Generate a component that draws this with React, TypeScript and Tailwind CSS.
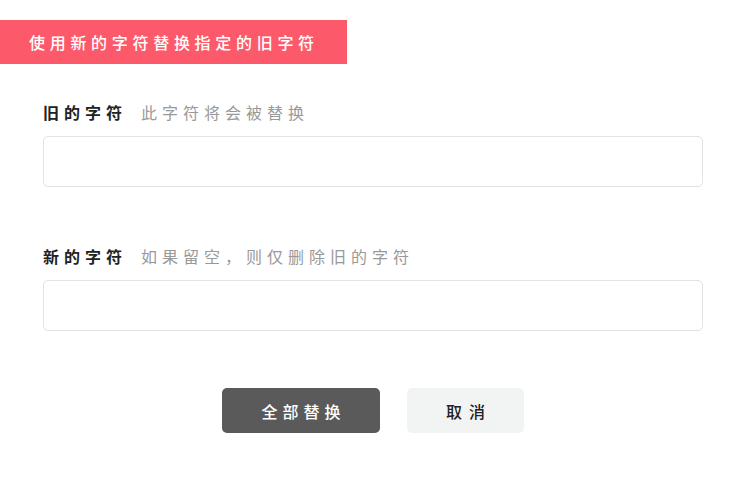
import React from "react";

const font = { fontFamily: '"Noto Sans CJK SC", "Noto Sans", sans-serif' };

export default function App() {
  return (
    <div className="w-[746px] h-[480px] bg-white" style={font}>
      <div className="pt-[20px]">
        <div className="w-[347px] h-[44px] bg-[#fc5a6a] flex items-center pl-[29px] text-white text-[16px] tracking-[4.7px] font-medium">
          使用新的字符替换指定的旧字符
        </div>
      </div>
      <div className="px-[43px]">
        <div className="mt-[36px] h-[24px] flex items-center">
          <span className="text-[16px] font-bold text-[#222] tracking-[5px]">旧的字符</span>
          <span className="ml-[14px] text-[16px] text-[#999] tracking-[5px]">此字符将会被替换</span>
        </div>
        <input className="mt-[12px] block w-[660px] h-[51px] border border-[#e3e3e3] rounded-[5px] outline-none px-3" />
        <div className="mt-[57px] h-[24px] flex items-center">
          <span className="text-[16px] font-bold text-[#222] tracking-[5px]">新的字符</span>
          <span className="ml-[14px] text-[16px] text-[#999] tracking-[5px]">如果留空，则仅删除旧的字符</span>
        </div>
        <input className="mt-[12px] block w-[660px] h-[51px] border border-[#e3e3e3] rounded-[5px] outline-none px-3" />
      </div>
      <div className="mt-[57px] flex justify-center gap-[27px]">
        <button className="w-[158px] h-[45px] rounded-[5px] bg-[#5a5a5a] text-white text-[16px] tracking-[5px] indent-[5px] font-medium">
          全部替换
        </button>
        <button className="w-[117px] h-[45px] rounded-[5px] bg-[#f2f4f3] text-[#222] text-[16px] tracking-[7px] indent-[7px] font-medium">
          取消
        </button>
      </div>
    </div>
  );
}
